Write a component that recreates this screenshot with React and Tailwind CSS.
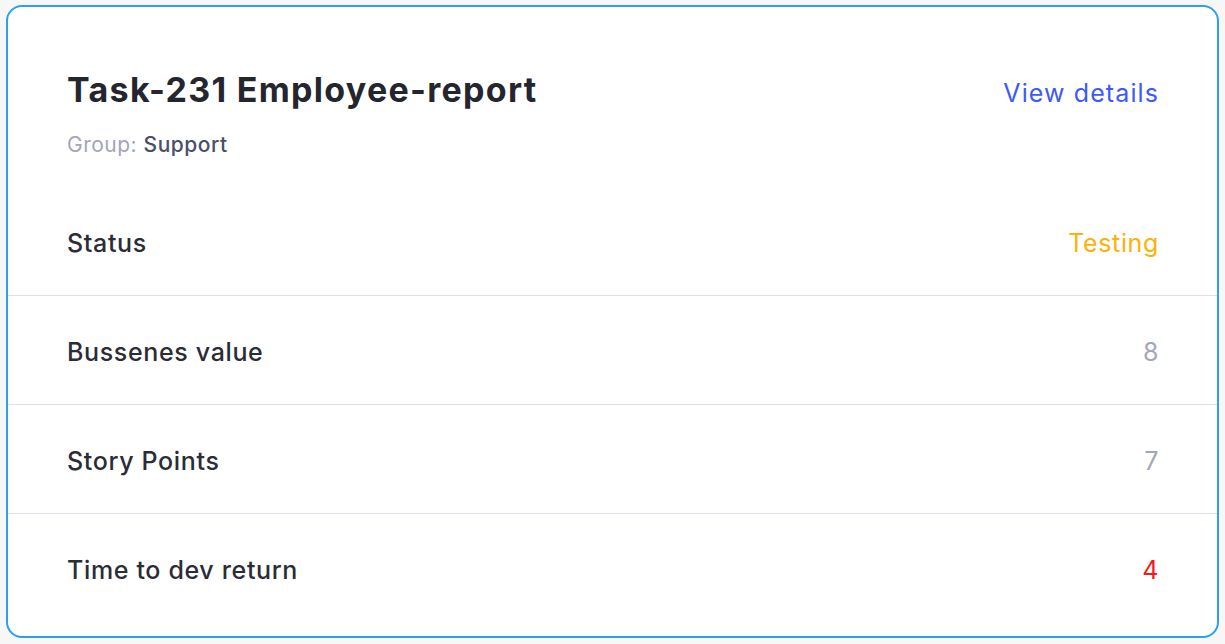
import React from 'react';

const rows = [
    { label: 'Status', value: 'Testing', color: 'text-[#fbb20a]' },
    { label: 'Bussenes value', value: '8', color: 'text-[#a3a5b8]' },
    { label: 'Story Points', value: '7', color: 'text-[#a3a5b8]' },
    { label: 'Time to dev return', value: '4', color: 'text-[#f41a1a]' },
];

const App = () => {
    return (
        <div className="min-h-screen bg-[#f7f7f8] pt-[5px] px-[6px] font-['Inter','Lato',sans-serif]">
            <div className="w-[1213px] h-[633px] bg-white border-2 border-[#2c9ef7] rounded-[16px] overflow-hidden flex flex-col">
                <div className="h-[180px] shrink-0 pl-[59px] pr-[58px] pt-[63px] flex items-start justify-between">
                    <div>
                        <h1 className="text-[34px] leading-[40px] font-bold tracking-[1.3px] text-[#23252f]">Task-231 Employee-report</h1>
                        <p className="mt-[21px] text-[21px] leading-[28px] tracking-[0.5px]">
                            <span className="text-[#a3a5b8]">Group: </span>
                            <span className="text-[#4a4e68] font-medium">Support</span>
                        </p>
                    </div>
                    <a href="#" className="mt-[7px] text-[25px] leading-[32px] tracking-[1.1px] text-[#3c5afa]">View details</a>
                </div>

                {rows.map((r, i) => (
                    <div
                        key={i}
                        className={`pl-[59px] pr-[58px] pt-[5px] h-[109px] shrink-0 flex items-center justify-between ${i < rows.length - 1 ? 'border-b border-[#dfdfea]' : ''}`}
                    >
                        <span className="text-[25px] font-medium tracking-[0.65px] text-[#2a2c36]">{r.label}</span>
                        <span className={`text-[25px] tracking-[0.65px] ${r.color}`}>{r.value}</span>
                    </div>
                ))}
            </div>
        </div>
    );
};

export default App;
